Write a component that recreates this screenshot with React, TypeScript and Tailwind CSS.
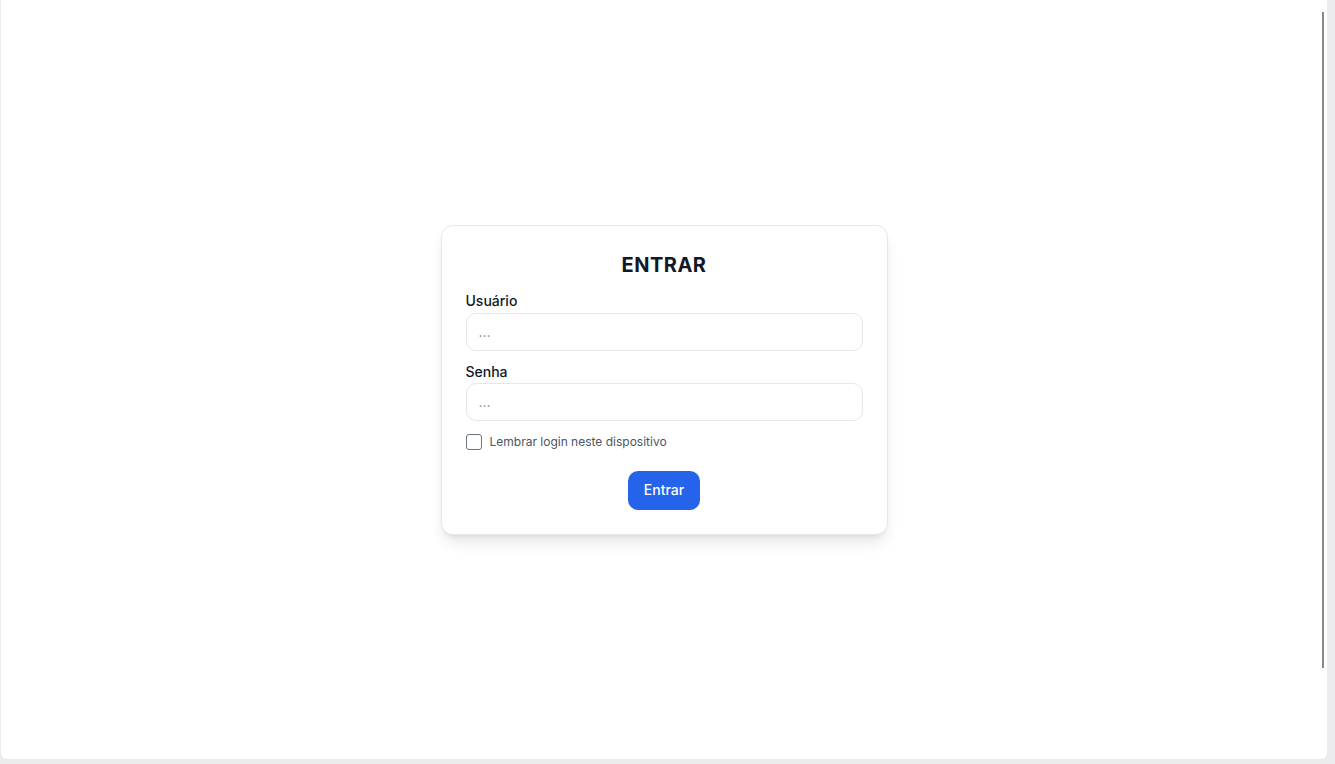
import React from "react";

export default function App() {
  return (
    <div
      className="relative h-[764px] w-[1335px] bg-[#ebebed] pl-px pr-[8px] pb-[5px]"
      style={{ fontFamily: "Inter, 'Noto Sans', sans-serif" }}
    >
      <div className="flex h-full w-full items-center justify-center rounded-b-[6px] bg-white">
        <div className="w-[447px] rounded-xl border border-[#e5e7eb] bg-white px-6 pt-[25px] pb-[24px] shadow-lg">
          <h1 className="mb-[12px] text-center text-xl font-bold leading-7 tracking-wide text-[#111827]">
            ENTRAR
          </h1>
          <label className="mb-[2px] block text-sm font-medium leading-5 text-[#111827]">
            Usuário
          </label>
          <input
            className="block w-full rounded-[10px] border border-[#e5e7eb] px-3 py-2 text-sm leading-5 text-[#111827] outline-none placeholder:text-[#8b909a]"
            placeholder="..."
          />
          <label className="mt-[11px] mb-[1px] block text-sm font-medium leading-5 text-[#111827]">
            Senha
          </label>
          <input
            type="password"
            className="block w-full rounded-[10px] border border-[#e5e7eb] px-3 py-2 text-sm leading-5 text-[#111827] outline-none placeholder:text-[#8b909a]"
            placeholder="..."
          />
          <div className="mt-[13px] flex items-center gap-2">
            <span className="block h-4 w-4 rounded-[3px] border border-[#6b7280] bg-white" />
            <span className="text-xs leading-4 text-[#4b5563]">Lembrar login neste dispositivo</span>
          </div>
          <div className="mt-[21px] flex justify-center">
            <button className="h-[39px] rounded-[10px] bg-[#2563eb] px-4 text-sm font-medium text-white">
              Entrar
            </button>
          </div>
        </div>
      </div>
      <div className="absolute left-[1322px] top-[12px] h-[656px] w-[2px] bg-[#8a8a8a]" />
    </div>
  );
}
